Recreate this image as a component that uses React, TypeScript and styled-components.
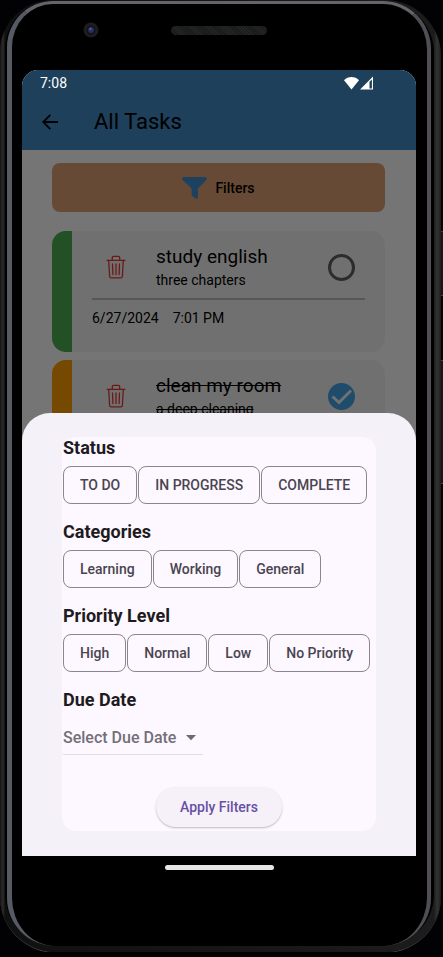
import React, { useState } from "react";
import styled, { createGlobalStyle } from "styled-components";

const GlobalStyle = createGlobalStyle`
  *, *::before, *::after { box-sizing: border-box; }
  body { margin: 0; background: #020103; font-family: Roboto, sans-serif; }
  h1, h2, h3, p { margin: 0; }
  button, input, select { font-family: inherit; margin: 0; }
`;

/* ---------- device ---------- */

const Device = styled.div`
  position: relative;
  display: flex;
  min-height: calc(100vh - 5px);
  margin-right: 2px;
  padding: 1px 7px 0 5px;
  border-radius: 52px 56px 56px 56px;
  background: linear-gradient(90deg, #161616 0, #2c2c2c 3px, #101010 5px, #1c1c1c calc(100% - 7px), #333 calc(100% - 4px), #1e1e1e 100%);
  box-shadow: 0 1px 0 #3c403f;
`;

const SideButton = styled.span<{ $top: number; $height: number }>`
  position: absolute;
  right: -2px;
  top: ${(p) => p.$top}px;
  width: 2px;
  height: ${(p) => p.$height}px;
  background: #161616;
  border-top: 1px solid #444;
  border-bottom: 1px solid #444;
`;

const Rim = styled.div`
  flex: 1;
  display: flex;
  margin-bottom: 6px;
  padding: 0 3px 0 2px;
  border-radius: 48px 52px 52px 52px;
  background: #000;
`;

const Bezel = styled.div`
  flex: 1;
  min-width: 0;
  display: flex;
  flex-direction: column;
  border-style: solid;
  border-width: 3px 4px 0 5px;
  border-color: #66636b #504e54 transparent #565a62;
  border-radius: 46px 48px 48px 48px;
  background: #000;
  padding: 0 11px 0 10px;
`;

const TopBezel = styled.div`
  height: 66px;
  display: grid;
  grid-template-columns: 1fr 96px 1fr;
  align-items: start;
  padding-top: 18px;
`;

const Camera = styled.svg`
  width: 16px;
  height: 16px;
  justify-self: center;
  margin-right: 12px;
`;

const Speaker = styled.span`
  height: 9px;
  margin-top: 4px;
  border-radius: 5px;
  background: repeating-linear-gradient(45deg, #181a1a 0 1px, #242626 1px 2px);
`;

const BottomBezel = styled.div`
  height: 90px;
  display: flex;
  justify-content: center;
  padding-top: 9px;
`;

const HomeBar = styled.span`
  width: 109px;
  height: 5px;
  border-radius: 3px;
  background: #e6e6e6;
`;

/* ---------- screen layers ---------- */

const Screen = styled.div`
  flex: 1;
  display: grid;
  grid-template-columns: minmax(0, 1fr);
  border-radius: 16px 16px 0 0;
  overflow: hidden;
`;

const Page = styled.div`
  grid-area: 1 / 1;
  background: #fff;
  color: #000;
`;

const Scrim = styled.div`
  grid-area: 1 / 1;
  background: rgba(0, 0, 0, 0.54);
  z-index: 1;
`;

const TopArea = styled.header`
  background: #428bc6;
`;

const StatusIcons = styled.svg`
  width: 30px;
  height: 14px;
`;

/* The system status bar stays bright above the scrim. */
const StatusBar = styled.div`
  grid-area: 1 / 1;
  z-index: 2;
  align-self: start;
  display: flex;
  justify-content: space-between;
  align-items: center;
  height: 25px;
  padding: 0 42px 0 18px;
  color: #fff;
  font-size: 14px;
  font-weight: 400;
`;

const AppBar = styled.div`
  display: flex;
  align-items: center;
  gap: 32px;
  height: 80px;
  padding: 24px 16px 0;
`;

const BackButton = styled.button`
  width: 24px;
  height: 24px;
  padding: 0;
  border: 0;
  background: none;
  svg { display: block; }
`;

const Title = styled.h1`
  font-size: 22px;
  font-weight: 400;
  line-height: 28px;
`;

const Content = styled.main`
  padding: 13px 31px 0 30px;
`;

const FilterButton = styled.button`
  display: flex;
  align-items: center;
  justify-content: center;
  gap: 8px;
  width: 100%;
  height: 49px;
  padding: 0;
  border: 0;
  border-radius: 8px;
  background: #e1a273;
  color: #000;
  font-size: 14px;
  font-weight: 500;
`;

const TaskList = styled.ul`
  display: grid;
  gap: 8px;
  margin: 19px 0 0;
  padding: 0;
  list-style: none;
`;

const TaskCard = styled.li<{ $accent: string }>`
  height: 121px;
  padding: 13px 20px 0;
  border-left: 20px solid ${(p) => p.$accent};
  border-radius: 14px;
  background: #f5f5f5;
`;

const TaskTop = styled.div`
  display: grid;
  grid-template-columns: 48px 1fr 48px;
  column-gap: 16px;
  align-items: center;
  height: 46px;
`;

const DeleteButton = styled.button`
  justify-self: center;
  padding: 0;
  border: 0;
  background: none;
  color: #e53935;
  svg { display: block; }
`;

const TaskName = styled.h2<{ $done: boolean }>`
  font-size: 19px;
  font-weight: 400;
  line-height: 26px;
  white-space: nowrap;
  text-decoration: ${(p) => (p.$done ? "line-through" : "none")};
`;

const TaskNote = styled.p<{ $done: boolean }>`
  font-size: 14px;
  line-height: 20px;
  white-space: nowrap;
  text-decoration: ${(p) => (p.$done ? "line-through" : "none")};
`;

const DoneLabel = styled.label`
  display: grid;
  justify-items: center;
  align-items: center;
  input, svg { grid-area: 1 / 1; }
  svg { pointer-events: none; }
`;

const DoneBox = styled.input`
  appearance: none;
  width: 27px;
  height: 27px;
  border: 3px solid #616161;
  border-radius: 50%;
  &:checked { border: 0; background: #42a5e8; }
`;

const TaskDate = styled.div`
  display: flex;
  gap: 14px;
  margin-top: 8px;
  padding-top: 9px;
  border-top: 2px solid #bdbdbd;
  font-size: 14px;
  line-height: 18px;
`;

/* ---------- bottom sheet ---------- */

const Sheet = styled.section`
  grid-area: 1 / 1;
  align-self: end;
  z-index: 3;
  padding: 24px 40px 25px;
  border-radius: 28px 28px 0 0;
  background: #f5f1f8;
`;

const Panel = styled.form`
  display: flex;
  flex-direction: column;
  gap: 17px;
  padding: 0 1px 4px;
  border-radius: 14px;
  background: #fdf7ff;
`;

const Group = styled.div`
  display: flex;
  flex-direction: column;
  gap: 7px;
`;

const GroupTitle = styled.h3`
  font-size: 18px;
  font-weight: 700;
  line-height: 22px;
  color: #1d1b20;
`;

const ChipRow = styled.div`
  display: flex;
  gap: 1px;
`;

const Chip = styled.button<{ $on: boolean }>`
  height: 38px;
  padding: 0 16px;
  border: 1px solid #8a858e;
  border-radius: 8px;
  background: ${(p) => (p.$on ? "#e8def8" : "transparent")};
  color: #49454f;
  font-size: 14px;
  font-weight: 500;
  white-space: nowrap;
`;

const SelectBox = styled.div`
  display: grid;
  align-self: flex-start;
  align-items: center;
  width: 140px;
  height: 37px;
  padding-top: 3px;
  border-bottom: 1px solid #e3dde5;
  select, svg { grid-area: 1 / 1; }
  svg { justify-self: end; margin-right: 6px; pointer-events: none; }
`;

const DateSelect = styled.select`
  appearance: none;
  width: 100%;
  padding: 0 20px 0 0;
  border: 0;
  background: none;
  color: #736f76;
  font-size: 16px;
  font-weight: 500;
`;

const ApplyButton = styled.button`
  align-self: center;
  height: 40px;
  margin-top: 15px;
  padding: 0 24px;
  border: 0;
  border-radius: 20px;
  background: #f6f1f9;
  box-shadow: 0 1px 2px rgba(0, 0, 0, 0.25);
  color: #6750a4;
  font-size: 14px;
  font-weight: 500;
`;

/* ---------- icons ---------- */

const BackArrow = () => (
  <svg width="24" height="24" viewBox="0 0 24 24" fill="none" stroke="#000" strokeWidth="1.800">
    <path d="M20 12H5.500M12.300 4.800 5.200 12l7.100 7.200" />
  </svg>
);

const Funnel = () => (
  <svg width="25" height="22" viewBox="0 0 25 22" fill="#3f8fd0">
    <path d="M2 0h21c1.700 0 2.400 1.800 1.300 3L16 11.500V20c0 1.500-1.300 2.200-2.500 1.400l-3-2.200c-.6-.4-.9-1-.9-1.700v-6L.7 3C-.4 1.800.3 0 2 0z" />
  </svg>
);

const Trash = () => (
  <svg width="20" height="24" viewBox="0 0 20 24" fill="none" stroke="currentColor" strokeWidth="1.300" strokeLinecap="round" strokeLinejoin="round">
    <path d="M1 5.300h18" />
    <path d="M6.300 5V2.600c0-.8.500-1.300 1.300-1.300h4.800c.8 0 1.300.5 1.300 1.300V5" />
    <path d="M2.700 5.500l.9 15.700c.1 1 .7 1.600 1.600 1.600h9.600c.9 0 1.500-.6 1.600-1.600l.9-15.700" />
    <path d="M6.500 9l.4 10.500M10 9v10.500M13.500 9l-.4 10.500" />
  </svg>
);

const CheckMark = () => (
  <svg width="27" height="27" viewBox="0 0 27 27" fill="none" stroke="#f5f5f5" strokeWidth="3">
    <path d="M4.500 13.500l6.500 6L23 7.500" />
  </svg>
);

/* ---------- data ---------- */

type Task = { name: string; note: string; accent: string; due?: { date: string; time: string }; done: boolean };

const initialTasks: Task[] = [
  { name: "study english", note: "three chapters", accent: "#4caf50", due: { date: "6/27/2024", time: "7:01 PM" }, done: false },
  { name: "clean my room", note: "a deep cleaning", accent: "#ff9f00", done: true },
];

const groups = [
  { title: "Status", options: ["TO DO", "IN PROGRESS", "COMPLETE"] },
  { title: "Categories", options: ["Learning", "Working", "General"] },
  { title: "Priority Level", options: ["High", "Normal", "Low", "No Priority"] },
];

export default function App() {
  const [tasks, setTasks] = useState(initialTasks);
  const [chosen, setChosen] = useState<string[]>([]);

  const toggleTask = (name: string) =>
    setTasks((list) => list.map((t) => (t.name === name ? { ...t, done: !t.done } : t)));
  const toggleOption = (option: string) =>
    setChosen((list) => (list.includes(option) ? list.filter((o) => o !== option) : [...list, option]));

  return (
    <>
      <GlobalStyle />
      <Device>
        <SideButton $top={231} $height={65} />
        <SideButton $top={360} $height={124} />
        <Rim>
          <Bezel>
            <TopBezel>
              <Camera viewBox="0 0 16 16">
                <circle cx="8" cy="8" r="7.500" fill="#1d1d1f" />
                <circle cx="8" cy="8" r="4.500" fill="#10121c" />
                <circle cx="8" cy="8" r="3" fill="#26305c" />
                <circle cx="7.500" cy="7" r="1.200" fill="#4c5c96" />
              </Camera>
              <Speaker />
            </TopBezel>
            <Screen>
              <Page>
                <TopArea>
                  <AppBar>
                    <BackButton aria-label="Back"><BackArrow /></BackButton>
                    <Title>All Tasks</Title>
                  </AppBar>
                </TopArea>
                <Content>
                  <FilterButton><Funnel />Filters</FilterButton>
                  <TaskList>
                    {tasks.map((t) => (
                      <TaskCard key={t.name} $accent={t.accent}>
                        <TaskTop>
                          <DeleteButton aria-label={`Delete ${t.name}`}><Trash /></DeleteButton>
                          <div>
                            <TaskName $done={t.done}>{t.name}</TaskName>
                            <TaskNote $done={t.done}>{t.note}</TaskNote>
                          </div>
                          <DoneLabel>
                            <DoneBox type="checkbox" aria-label={`${t.name} done`} checked={t.done} onChange={() => toggleTask(t.name)} />
                            {t.done && <CheckMark />}
                          </DoneLabel>
                        </TaskTop>
                        {t.due && <TaskDate><span>{t.due.date}</span><span>{t.due.time}</span></TaskDate>}
                      </TaskCard>
                    ))}
                  </TaskList>
                </Content>
              </Page>
              <Scrim />
              <StatusBar>
                <span>7:08</span>
                <StatusIcons viewBox="0 0 30 14" fill="#fff">
                  <path d="M0 4.200C4-.1 11-.1 15 4.200L7.500 13.500z" />
                  <path fillRule="evenodd" d="M29 .5V13.500H16zM27.900 3.400 25.500 5.800v6.600h2.400z" />
                </StatusIcons>
              </StatusBar>
              <Sheet aria-label="Filters">
                <Panel onSubmit={(e) => e.preventDefault()}>
                  {groups.map((g) => (
                    <Group key={g.title}>
                      <GroupTitle>{g.title}</GroupTitle>
                      <ChipRow>
                        {g.options.map((o) => (
                          <Chip key={o} type="button" $on={chosen.includes(o)} aria-pressed={chosen.includes(o)} onClick={() => toggleOption(o)}>
                            {o}
                          </Chip>
                        ))}
                      </ChipRow>
                    </Group>
                  ))}
                  <Group>
                    <GroupTitle as="label" htmlFor="due-date">Due Date</GroupTitle>
                    <SelectBox>
                      <DateSelect id="due-date" defaultValue="">
                        <option value="">Select Due Date</option>
                        <option value="today">Today</option>
                        <option value="week">This Week</option>
                      </DateSelect>
                      <svg width="12" height="6" viewBox="0 0 12 6" fill="#6d6970"><path d="M1 0h10L6 5.200z" /></svg>
                    </SelectBox>
                  </Group>
                  <ApplyButton type="submit">Apply Filters</ApplyButton>
                </Panel>
              </Sheet>
            </Screen>
            <BottomBezel><HomeBar /></BottomBezel>
          </Bezel>
        </Rim>
      </Device>
    </>
  );
}
